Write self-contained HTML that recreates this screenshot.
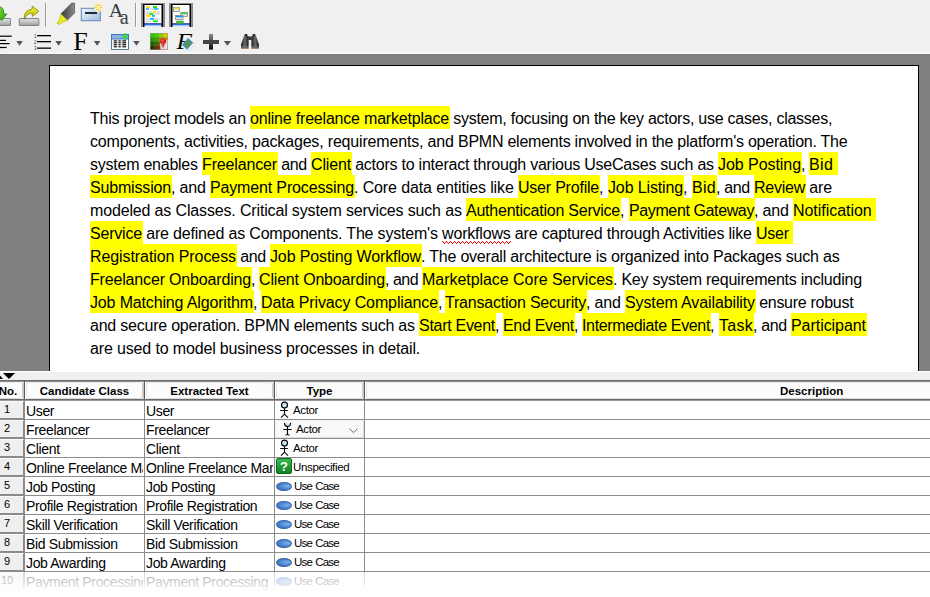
<!DOCTYPE html>
<html><head><meta charset="utf-8">
<style>
*{margin:0;padding:0;box-sizing:border-box}
html,body{width:930px;height:597px;overflow:hidden;background:#f0f0f0;font-family:"Liberation Sans",sans-serif;position:relative}
.abs{position:absolute}
#gray{position:absolute;left:0;top:54px;width:930px;height:317px;background:#808080}
#page{position:absolute;left:49px;top:65px;width:870px;height:306px;background:#fff;border:1px solid #000;border-bottom:none}
.sg{position:absolute;height:23px;line-height:25px;font-size:16px;white-space:pre;color:#000}
.sg.h{background:#ffff00}
.ln{position:absolute;left:90px;height:23px;line-height:25px;font-size:16px;white-space:pre;color:#000}
.ln b{font-weight:normal;display:inline-block;height:23px;line-height:25px;vertical-align:top;background:#ffff00}
#split{position:absolute;left:0;top:371px;width:930px;height:9px;background:#f0f0f0}
#tbl{position:absolute;left:0;top:380px;width:930px;height:217px;background:#fff}
.hl{position:absolute;background:#6e6e6e}
.hc{position:absolute;top:2px;height:17px;background:#fcfcfc;border:1px solid #e6e6e6;border-right-color:#cfcfcf;border-bottom-color:#d8d8d8;border-radius:3px;font-weight:bold;font-size:11.5px;line-height:16px;text-align:center;color:#000}
.cell{position:absolute;font-size:14px;line-height:20px;height:18px;letter-spacing:-0.35px;white-space:pre;overflow:hidden;color:#000}
.tt{position:absolute;font-size:11.5px;line-height:18px;letter-spacing:-0.35px;white-space:pre;color:#000}
.num{position:absolute;left:0;width:24px;height:19px;background:#efefef;border-top:1px solid #fcfcfc;border-bottom:2px solid #8a8a8a;border-right:1px solid #8a8a8a;font-size:11px;text-align:center;line-height:14px;padding-right:9px;color:#000}
</style></head><body>
<svg class="abs" style="left:0;top:0" width="270" height="54" viewBox="0 0 270 54">
<defs>
<linearGradient id="docb" x1="0" y1="0" x2="0" y2="1"><stop offset="0" stop-color="#0a46c0"/><stop offset="0.35" stop-color="#3a7ae0"/><stop offset="0.65" stop-color="#c8dcf8"/><stop offset="1" stop-color="#eef4fc"/></linearGradient>
<linearGradient id="tray" x1="0" y1="0" x2="0" y2="1"><stop offset="0" stop-color="#e4e4e4"/><stop offset="0.6" stop-color="#bdbdbd"/><stop offset="1" stop-color="#9a9a9a"/></linearGradient>
<linearGradient id="grn" x1="0" y1="0" x2="1" y2="1"><stop offset="0" stop-color="#7ee23a"/><stop offset="1" stop-color="#2aa010"/></linearGradient>
<linearGradient id="yel" x1="0" y1="0" x2="0" y2="1"><stop offset="0" stop-color="#f0f040"/><stop offset="1" stop-color="#b8b800"/></linearGradient>
<linearGradient id="hlb" x1="0" y1="0" x2="1" y2="0"><stop offset="0" stop-color="#3a3a3a"/><stop offset="1" stop-color="#8a8a8a"/></linearGradient>
<linearGradient id="blu" x1="0" y1="0" x2="1" y2="1"><stop offset="0" stop-color="#f2f6fc"/><stop offset="1" stop-color="#9ebce4"/></linearGradient>
<linearGradient id="plus" x1="0" y1="0" x2="0" y2="1"><stop offset="0" stop-color="#8a8a8a"/><stop offset="1" stop-color="#0a0a0a"/></linearGradient>
<linearGradient id="bino" x1="0" y1="0" x2="1" y2="0"><stop offset="0" stop-color="#1a1a1a"/><stop offset="0.5" stop-color="#6a6a6a"/><stop offset="1" stop-color="#1a1a1a"/></linearGradient>
<radialGradient id="pin" cx="0.4" cy="0.35" r="0.6"><stop offset="0" stop-color="#ff6060"/><stop offset="1" stop-color="#c00000"/></radialGradient>
</defs>
<!-- icon1: green arrow onto tray (clipped) -->
<rect x="-10" y="18.5" width="20.5" height="7" rx="0.6" fill="url(#tray)" stroke="#7c8088" stroke-width="1"/>
<path d="M-2 7 Q3 6 3.6 12 L3.6 14 L6.8 14 L1.6 20.5 L-3.6 14 L-0.5 14 Z" fill="url(#grn)" stroke="#238a0c" stroke-width="0.9"/>
<!-- icon2: yellow curved arrow onto tray -->
<rect x="19.3" y="18.5" width="19.5" height="7" rx="0.6" fill="url(#tray)" stroke="#7c8088" stroke-width="1"/>
<path d="M24.3 19.5 Q23.5 10 32 9.2 L32.3 6.2 L38.8 11.3 L32.3 16.4 L32.2 13 Q27 13 24.3 19.5 Z" fill="url(#yel)" stroke="#8c8c10" stroke-width="0.9"/>
<!-- separator -->
<rect x="45" y="3" width="1" height="24" fill="#9a9a9a"/><rect x="46" y="3" width="1" height="24" fill="#ffffff" opacity="0.8"/>
<!-- highlighter -->
<path d="M61 13.7 L71.6 3.1 L74.6 3.1 L74.6 12.9 L67.4 20.1 Z" fill="url(#hlb)" stroke="#333" stroke-width="0.5"/>
<path d="M60.9 14 L67.4 20.4 L65.4 21.2 L63.6 21.6 L59.3 24.6 L57.3 23.4 L59.6 19.4 L60.2 17.2 Z" fill="#ecec20" stroke="#a8a800" stroke-width="0.6"/>
<!-- blue rect with star -->
<rect x="81.3" y="8.3" width="19" height="12.4" fill="url(#blu)" stroke="#6688bb" stroke-width="1"/>
<rect x="85" y="12" width="12" height="2" fill="#1c2c3c"/>
<circle cx="98.4" cy="7.5" r="4.4" fill="#fdf6b0"/><g stroke="#f0a020" stroke-width="0.9"><line x1="98.4" y1="4" x2="98.4" y2="5.7"/><line x1="98.4" y1="9.3" x2="98.4" y2="11"/><line x1="94.9" y1="7.5" x2="96.6" y2="7.5"/><line x1="100.2" y1="7.5" x2="101.9" y2="7.5"/><line x1="96" y1="5.1" x2="97" y2="6.1"/><line x1="99.8" y1="8.9" x2="100.8" y2="9.9"/><line x1="100.8" y1="5.1" x2="99.8" y2="6.1"/><line x1="97" y1="8.9" x2="96" y2="9.9"/></g>
<!-- Aa -->
<text x="108.8" y="17" font-family="Liberation Serif" font-size="18" fill="#3a3e44" transform="translate(108.8 17) scale(1.12 1) translate(-108.8 -17)">A</text>
<text x="119.8" y="24" font-family="Liberation Serif" font-size="20" fill="#3a3e44">a</text>
<!-- separator -->
<rect x="135" y="3" width="1" height="24" fill="#9a9a9a"/><rect x="136" y="3" width="1" height="24" fill="#ffffff" opacity="0.8"/>
<!-- doc icon 1 -->
<rect x="141" y="3" width="24" height="24" fill="#8a8a8a"/>
<rect x="143" y="4" width="20" height="23" fill="#000"/>
<rect x="144.5" y="5" width="17" height="18.5" fill="#fff"/>
<rect x="144.5" y="23.5" width="17" height="3.5" fill="url(#docb)"/>
<g>
<rect x="146" y="6.5" width="3" height="1.5" fill="#ccc"/><rect x="147" y="6" width="3" height="2" fill="#ffe000"/><rect x="153" y="6" width="4" height="2" fill="#22dd22"/>
<rect x="146" y="8.2" width="3" height="1.6" fill="#10b0ff"/><rect x="150" y="8.5" width="4" height="1" fill="#bbb"/><rect x="154" y="8.2" width="4.5" height="1.6" fill="#10b0ff"/>
<rect x="145.5" y="11.5" width="7" height="1" fill="#bbb"/><rect x="153" y="11" width="3" height="1.8" fill="#ffe000"/><rect x="157" y="11.5" width="3" height="1" fill="#bbb"/>
<rect x="145.5" y="13.5" width="4" height="1" fill="#bbb"/><rect x="149.5" y="13" width="4" height="1.8" fill="#22dd22"/><rect x="154.5" y="13.5" width="5" height="1" fill="#bbb"/>
<rect x="146" y="15" width="5" height="1.8" fill="#ffe000"/><rect x="152" y="15" width="3" height="1.8" fill="#10b0ff"/>
<rect x="145.5" y="18.5" width="4" height="1" fill="#bbb"/><rect x="150" y="18" width="4" height="1.8" fill="#10b0ff"/><rect x="154.5" y="18.5" width="5" height="1" fill="#bbb"/>
<rect x="145.5" y="20.8" width="5" height="1" fill="#bbb"/><rect x="153" y="20.3" width="5" height="1.8" fill="#22dd22"/>
</g>
<!-- doc icon 2 -->
<rect x="169" y="3" width="24" height="24" fill="#8a8a8a"/>
<rect x="171" y="4" width="20" height="23" fill="#000"/>
<rect x="172.5" y="5" width="17" height="18.5" fill="#fff"/>
<rect x="172.5" y="23.5" width="17" height="3.5" fill="url(#docb)"/>
<rect x="173.5" y="7.3" width="6" height="4.2" fill="#e8e8e8" stroke="#777" stroke-width="0.7"/><rect x="173.9" y="7.6" width="5.2" height="1.5" fill="#ffe000"/>
<rect x="180.8" y="12.3" width="6.6" height="4" fill="#e8e8e8" stroke="#777" stroke-width="0.7"/><rect x="181.2" y="12.6" width="5.8" height="1.5" fill="#22dd22"/>
<rect x="175.6" y="15.5" width="7.4" height="4" fill="#e8e8e8" stroke="#777" stroke-width="0.7"/><rect x="176" y="15.8" width="6.6" height="1.5" fill="#1a90f0"/>
<rect x="176.5" y="21" width="6.8" height="2.5" fill="#22dd22" stroke="#777" stroke-width="0.6"/>
<!-- row2: align -->
<g fill="#000"><rect x="0" y="35.6" width="11.8" height="1.2"/><rect x="0" y="39.8" width="6" height="1.2"/><rect x="0" y="43" width="9.6" height="1.2"/><rect x="0" y="46.9" width="6.6" height="1.2"/></g>
<path d="M16.3 41 L22.8 41 L19.55 45.8 Z" fill="#555"/>
<!-- numbered list -->
<g fill="#000"><rect x="37" y="35" width="14" height="1.3"/><rect x="37" y="41" width="14" height="1.3"/><rect x="37" y="47.5" width="14" height="1.3"/></g>
<g fill="#444" font-family="Liberation Sans" font-size="4.5"><text x="34" y="37.5">1</text><text x="34" y="43.5">2</text><text x="34" y="50">3</text></g>
<path d="M55.3 41 L61.8 41 L58.55 45.8 Z" fill="#555"/>
<!-- F -->
<text x="73.3" y="50" font-family="Liberation Serif" font-size="26" fill="#000">F</text>
<path d="M93.9 41 L100.4 41 L97.15 45.8 Z" fill="#555"/>
<!-- table icon -->
<rect x="111.5" y="34.5" width="17" height="15" fill="#fff" stroke="#4f7f94" stroke-width="1"/>
<rect x="111.5" y="34.5" width="17" height="4.5" fill="#8db2e2" stroke="#3a74d0" stroke-width="1"/>
<g fill="#c0c0c0"><rect x="113.5" y="40.3" width="13" height="1.2"/><rect x="113.5" y="42.2" width="13" height="1.2"/><rect x="113.5" y="44.1" width="13" height="1.2"/><rect x="113.5" y="46.1" width="13" height="1.2"/></g>
<g fill="#1a1a1a"><rect x="113.8" y="40.3" width="3" height="1.2"/><rect x="118.6" y="40.3" width="2" height="1.2"/><rect x="122.4" y="40.3" width="3.6" height="1.2"/>
<rect x="113.8" y="42.2" width="3" height="1.2"/><rect x="118.6" y="42.2" width="2" height="1.2"/><rect x="122.4" y="42.2" width="3.6" height="1.2"/>
<rect x="113.8" y="44.1" width="3" height="1.2"/><rect x="118.6" y="44.1" width="2" height="1.2"/><rect x="122.4" y="44.1" width="3.6" height="1.2"/>
<rect x="113.8" y="46.1" width="3" height="1.2"/><rect x="118.6" y="46.1" width="2" height="1.2"/><rect x="122.4" y="46.1" width="3.6" height="1.2"/></g>
<path d="M124 33.2 h2 v2.2 h2.2 v2 h-2.2 v2.4 h-2 v-2.4 h-2.4 v-2 h2.4 Z" fill="#3ad84a"/>
<path d="M133.2 41 L139.7 41 L136.45 45.8 Z" fill="#555"/>
<!-- color grid -->
<rect x="150" y="33" width="18" height="17" fill="#999"/>
<g>
<rect x="150.5" y="33.5" width="4.2" height="4" fill="#22cc00"/><rect x="154.7" y="33.5" width="4.2" height="4" fill="#44cc00"/><rect x="158.9" y="33.5" width="4.2" height="4" fill="#88cc00"/><rect x="163.1" y="33.5" width="4.4" height="4" fill="#cccc00"/>
<rect x="150.5" y="37.5" width="4.2" height="4" fill="#229900"/><rect x="154.7" y="37.5" width="4.2" height="4" fill="#449900"/><rect x="158.9" y="37.5" width="4.2" height="4" fill="#889900"/><rect x="163.1" y="37.5" width="4.4" height="4" fill="#cc9900"/>
<rect x="150.5" y="41.5" width="4.2" height="4" fill="#116600"/><rect x="154.7" y="41.5" width="4.2" height="4" fill="#446600"/><rect x="158.9" y="41.5" width="4.2" height="4" fill="#886600"/><rect x="163.1" y="41.5" width="4.4" height="4" fill="#cc6600"/>
<rect x="150.5" y="45.5" width="4.2" height="4" fill="#223300"/><rect x="154.7" y="45.5" width="4.2" height="4" fill="#663300"/><rect x="158.9" y="45.5" width="4.2" height="4" fill="#883300"/><rect x="163.1" y="45.5" width="4.4" height="4" fill="#cc3300"/>
</g>
<path d="M160 43 L167.5 40 L167.5 49.5 L160.5 49.5 Z" fill="#e0e0e0"/>
<circle cx="163" cy="41.3" r="3" fill="url(#pin)"/>
<path d="M160.6 42.5 L165.4 42.5 L163 48.5 Z" fill="#e04040"/>
<!-- italic F with eraser -->
<text x="176.5" y="49.3" font-family="Liberation Serif" font-style="italic" font-size="24" fill="#000" transform="translate(176.5 49.3) scale(1.06 1.0) translate(-176.5 -49.3)">F</text>
<g transform="translate(187.6 43.8) rotate(-49)"><rect x="-4.3" y="-3.2" width="8.6" height="8.6" fill="#fafafa" stroke="#c8c8c8" stroke-width="0.6"/><rect x="-4.3" y="-3.2" width="8.6" height="6.4" fill="#5a9060" stroke="#3aa0f0" stroke-width="0.9"/></g>
<!-- plus -->
<rect x="209" y="34" width="4" height="15.6" fill="url(#plus)"/>
<rect x="203" y="40" width="16" height="4" fill="#444"/>
<path d="M223.9 41.1 L231 41.1 L227.45 45.7 Z" fill="#555"/>
<!-- binoculars -->
<g>
<rect x="244.5" y="34" width="3" height="2.4" rx="1" fill="#222"/><rect x="252.5" y="34" width="3" height="2.4" rx="1" fill="#222"/>
<path d="M244 36 L248.6 36 L248.6 47 L241 47 L241 44.5 Z" fill="url(#bino)"/>
<path d="M251.4 36 L256 36 L259 44.5 L259 47 L251.4 47 Z" fill="url(#bino)"/>
<rect x="248.4" y="36.5" width="3.2" height="3.5" fill="#333"/>
<rect x="241" y="46.8" width="7.6" height="0.8" fill="#ddd"/><rect x="251.4" y="46.8" width="7.6" height="0.8" fill="#ddd"/>
<rect x="241" y="47.4" width="7.6" height="1" fill="#111"/><rect x="251.4" y="47.4" width="7.6" height="1" fill="#111"/>
<rect x="241" y="48.3" width="7.6" height="0.6" fill="#c08040"/><rect x="251.4" y="48.3" width="7.6" height="0.6" fill="#c08040"/>
</g>
</svg>

<div id="gray"></div>
<div class="abs" style="left:0;top:53px;width:930px;height:1px;background:#fbfbfb"></div>
<div class="abs" style="left:0;top:54px;width:930px;height:1px;background:#777"></div>
<div id="page"></div>
<!--TEXT-->
<span class="sg" style="left:90px;top:106px;letter-spacing:-0.235px">This project models an </span>
<span class="sg h" style="left:250px;top:106px;letter-spacing:-0.199px;width:200.00px">online freelance marketplace</span>
<span class="sg" style="left:449px;top:106px;letter-spacing:-0.256px"> system, focusing on the key actors, use cases, classes,</span>
<span class="sg" style="left:90px;top:129px;letter-spacing:-0.175px">components, activities, packages, requirements, and </span>
<span class="sg" style="left:458px;top:129px;letter-spacing:-0.247px">BPMN elements involved in the platform's operation. The</span>
<span class="sg" style="left:90px;top:152px;letter-spacing:-0.241px">system enables </span>
<span class="sg h" style="left:202px;top:152px;letter-spacing:-0.148px;width:76.00px">Freelancer</span>
<span class="sg" style="left:277px;top:152px;letter-spacing:-0.319px"> and </span>
<span class="sg h" style="left:311px;top:152px;letter-spacing:-0.151px;width:41.00px">Client</span>
<span class="sg" style="left:351px;top:152px;letter-spacing:-0.240px"> actors to interact through various UseCases such as </span>
<span class="sg h" style="left:718px;top:152px;letter-spacing:-0.055px;width:84.00px">Job Posting</span>
<span class="sg" style="left:801px;top:152px;letter-spacing:-0.445px">, </span>
<span class="sg h" style="left:809px;top:152px;letter-spacing:0.355px;width:29.00px">Bid </span>
<span class="sg h" style="left:90px;top:175px;letter-spacing:-0.170px;width:82.00px">Submission</span>
<span class="sg" style="left:171px;top:175px;letter-spacing:-0.172px">, and </span>
<span class="sg h" style="left:210px;top:175px;letter-spacing:-0.152px;width:145.00px">Payment Processing</span>
<span class="sg" style="left:354px;top:175px;letter-spacing:-0.123px">. Core data entities like </span>
<span class="sg h" style="left:518px;top:175px;letter-spacing:-0.215px;width:82.00px">User Profile</span>
<span class="sg" style="left:599px;top:175px;letter-spacing:0.055px">, </span>
<span class="sg h" style="left:608px;top:175px;letter-spacing:-0.136px;width:76.00px">Job Listing</span>
<span class="sg" style="left:683px;top:175px;letter-spacing:0.055px">, </span>
<span class="sg h" style="left:692px;top:175px;letter-spacing:0.292px;width:25.00px">Bid</span>
<span class="sg" style="left:716px;top:175px;letter-spacing:-0.339px">, and </span>
<span class="sg h" style="left:754px;top:175px;letter-spacing:-0.245px;width:52.00px">Review</span>
<span class="sg" style="left:805px;top:175px;letter-spacing:-0.120px"> are</span>
<span class="sg" style="left:90px;top:198px;letter-spacing:-0.153px">modeled as Classes. Critical system services such as </span>
<span class="sg h" style="left:466px;top:198px;letter-spacing:-0.237px;width:155.00px">Authentication Service</span>
<span class="sg" style="left:620px;top:198px;letter-spacing:0.055px">, </span>
<span class="sg h" style="left:629px;top:198px;letter-spacing:-0.382px;width:126.00px">Payment Gateway</span>
<span class="sg" style="left:754px;top:198px;letter-spacing:-0.172px">, and </span>
<span class="sg h" style="left:793px;top:198px;letter-spacing:-0.046px;width:83.00px">Notification </span>
<span class="sg h" style="left:90px;top:221px;letter-spacing:-0.194px;width:53.00px">Service</span>
<span class="sg" style="left:142px;top:221px;letter-spacing:-0.189px"> are defined as Components. The system's workflows are captured through Activities like </span>
<span class="sg h" style="left:756px;top:221px;letter-spacing:-0.247px;width:37.00px">User </span>
<span class="sg h" style="left:90px;top:244px;letter-spacing:-0.081px;width:147.00px">Registration Process</span>
<span class="sg" style="left:236px;top:244px;letter-spacing:-0.319px"> and </span>
<span class="sg h" style="left:270px;top:244px;letter-spacing:-0.127px;width:152.00px">Job Posting Workflow</span>
<span class="sg" style="left:421px;top:244px;letter-spacing:-0.206px">. The overall architecture is organized into Packages such as</span>
<span class="sg h" style="left:90px;top:267px;letter-spacing:-0.169px;width:162.00px">Freelancer Onboarding</span>
<span class="sg" style="left:251px;top:267px;letter-spacing:-0.445px">, </span>
<span class="sg h" style="left:259px;top:267px;letter-spacing:-0.175px;width:127.00px">Client Onboarding</span>
<span class="sg" style="left:385px;top:267px;letter-spacing:-0.505px">, and </span>
<span class="sg h" style="left:422px;top:267px;letter-spacing:-0.043px;width:192.00px">Marketplace Core Services</span>
<span class="sg" style="left:613px;top:267px;letter-spacing:-0.234px">. Key system requirements including</span>
<span class="sg h" style="left:90px;top:290px;letter-spacing:-0.151px;width:164.00px">Job Matching Algorithm</span>
<span class="sg" style="left:253px;top:290px;letter-spacing:-0.445px">, </span>
<span class="sg h" style="left:261px;top:290px;letter-spacing:-0.114px;width:178.00px">Data Privacy Compliance</span>
<span class="sg" style="left:438px;top:290px;letter-spacing:-0.945px">, </span>
<span class="sg h" style="left:445px;top:290px;letter-spacing:-0.212px;width:142.00px">Transaction Security</span>
<span class="sg" style="left:586px;top:290px;letter-spacing:-0.172px">, and </span>
<span class="sg h" style="left:625px;top:290px;letter-spacing:-0.116px;width:131.00px">System Availability</span>
<span class="sg" style="left:755px;top:290px;letter-spacing:-0.284px"> ensure robust</span>
<span class="sg" style="left:90px;top:313px;letter-spacing:-0.224px">and secure operation. BPMN elements such as </span>
<span class="sg h" style="left:419px;top:313px;letter-spacing:-0.287px;width:77.00px">Start Event</span>
<span class="sg" style="left:495px;top:313px;letter-spacing:-0.445px">, </span>
<span class="sg h" style="left:503px;top:313px;letter-spacing:-0.314px;width:72.00px">End Event</span>
<span class="sg" style="left:574px;top:313px;letter-spacing:-0.445px">, </span>
<span class="sg h" style="left:582px;top:313px;letter-spacing:-0.350px;width:129.00px">Intermediate Event</span>
<span class="sg" style="left:710px;top:313px;letter-spacing:0.055px">, </span>
<span class="sg h" style="left:719px;top:313px;letter-spacing:0.273px;width:35.00px">Task</span>
<span class="sg" style="left:753px;top:313px;letter-spacing:-0.339px">, and </span>
<span class="sg h" style="left:791px;top:313px;letter-spacing:-0.054px;width:76.00px">Participant</span>
<span class="sg" style="left:90px;top:336px;letter-spacing:-0.148px">are used to model business processes in detail.</span>
<!--/TEXT-->
<svg class="abs" style="left:440px;top:239px" width="72" height="6" shape-rendering="crispEdges"><path d="M2 2h1v1h-1zM3 3h1v1h-1zM4 4h1v1h-1zM5 3h1v1h-1zM6 2h1v1h-1zM7 3h1v1h-1zM8 4h1v1h-1zM9 3h1v1h-1zM10 2h1v1h-1zM11 3h1v1h-1zM12 4h1v1h-1zM13 3h1v1h-1zM14 2h1v1h-1zM15 3h1v1h-1zM16 4h1v1h-1zM17 3h1v1h-1zM18 2h1v1h-1zM19 3h1v1h-1zM20 4h1v1h-1zM21 3h1v1h-1zM22 2h1v1h-1zM23 3h1v1h-1zM24 4h1v1h-1zM25 3h1v1h-1zM26 2h1v1h-1zM27 3h1v1h-1zM28 4h1v1h-1zM29 3h1v1h-1zM30 2h1v1h-1zM31 3h1v1h-1zM32 4h1v1h-1zM33 3h1v1h-1zM34 2h1v1h-1zM35 3h1v1h-1zM36 4h1v1h-1zM37 3h1v1h-1zM38 2h1v1h-1zM39 3h1v1h-1zM40 4h1v1h-1zM41 3h1v1h-1zM42 2h1v1h-1zM43 3h1v1h-1zM44 4h1v1h-1zM45 3h1v1h-1zM46 2h1v1h-1zM47 3h1v1h-1zM48 4h1v1h-1zM49 3h1v1h-1zM50 2h1v1h-1zM51 3h1v1h-1zM52 4h1v1h-1zM53 3h1v1h-1zM54 2h1v1h-1zM55 3h1v1h-1zM56 4h1v1h-1zM57 3h1v1h-1zM58 2h1v1h-1zM59 3h1v1h-1zM60 4h1v1h-1zM61 3h1v1h-1zM62 2h1v1h-1zM63 3h1v1h-1zM64 4h1v1h-1zM65 3h1v1h-1zM66 2h1v1h-1zM67 3h1v1h-1zM68 4h1v1h-1zM69 3h1v1h-1zM70 2h1v1h-1z" fill="#ff0000"/></svg>
<div id="split"></div>
<div class="abs" style="left:0;top:371px;width:930px;height:1px;background:#fff"></div>
<svg class="abs" style="left:0;top:372px" width="20" height="8"><path d="M3 1 L15 1 L9 7 Z" fill="#000"/><path d="M-3 7 L3 7 L0 3.5 Z" fill="#000"/></svg>
<div id="tbl">
<div class="hl" style="left:0;top:0;width:930px;height:1px;background:#6a6a6a"></div>
<div class="hl" style="left:0;top:1px;width:930px;height:1px;background:#8e949a"></div><div class="hl" style="left:0;top:2px;width:930px;height:1px;background:#fff"></div>
<div class="hc" style="left:-7px;width:30px">No.</div>
<div class="hc" style="left:26px;width:117px">Candidate Class</div>
<div class="hc" style="left:146px;width:127px">Extracted Text</div>
<div class="hc" style="left:276px;width:87px">Type</div>
<div class="hc" style="left:366px;width:564px;border-right:none;border-radius:3px 0 0 3px;text-indent:0"><span style="position:absolute;left:413px;top:0">Description</span></div>
<div class="hl" style="left:23px;top:2px;width:1px;height:17px;background:#c4c4c4"></div><div class="hl" style="left:24px;top:1px;width:1px;height:19px;background:#5a5a5a"></div>
<div class="hl" style="left:143px;top:2px;width:1px;height:17px;background:#c4c4c4"></div><div class="hl" style="left:144px;top:1px;width:1px;height:19px;background:#5a5a5a"></div>
<div class="hl" style="left:273px;top:2px;width:1px;height:17px;background:#c4c4c4"></div><div class="hl" style="left:274px;top:1px;width:1px;height:19px;background:#5a5a5a"></div>
<div class="hl" style="left:363px;top:2px;width:1px;height:17px;background:#c4c4c4"></div><div class="hl" style="left:364px;top:1px;width:1px;height:19px;background:#5a5a5a"></div>
<div class="hl" style="left:0;top:19px;width:930px;height:1px;background:#6a6a6a"></div>
<div class="hl" style="left:0;top:20px;width:930px;height:1px;background:#9a9a9a"></div>
</div>
<div id="rows" class="abs" style="left:0;top:400px;width:930px;height:197px">
<div class="num" style="top:1px">1</div>
<div class="cell" style="left:26px;top:1px;width:117px">User</div>
<div class="cell" style="left:146px;top:1px;width:127px">User</div>
<svg class="abs" style="left:274px;top:0px" width="20" height="19"><circle cx="10.5" cy="5.1" r="3" fill="#c4e4fa" stroke="#000" stroke-width="1.1"/><path d="M10.5 8.2 V14.3 M6.2 10.5 H13.8 M7 17.6 L10.5 14.2 L14 17.6" stroke="#000" stroke-width="1.1" fill="none"/></svg>
<div class="tt" style="left:293px;top:1px">Actor</div>
<div class="hl" style="left:0;top:19px;width:930px;height:1px;background:#8c8c8c"></div>
<div class="num" style="top:20px">2</div>
<div class="cell" style="left:26px;top:20px;width:117px">Freelancer</div>
<div class="cell" style="left:146px;top:20px;width:127px">Freelancer</div>
<div class="abs" style="left:275px;top:20px;width:89px;height:18px;background:#f9f9f9;border:1px solid #dedede;border-left-color:#f4f4f4;border-top-color:#f4f4f4"></div>
<svg class="abs" style="left:274px;top:20px" width="20" height="18"><path d="M10.6 3.6 A3 3 0 0 0 16.6 3.6 Z" fill="#c4e4fa"/><path d="M10.6 2.8 V3.6 A3 3 0 0 0 16.6 3.6 V2.8" fill="none" stroke="#000" stroke-width="1.1"/><path d="M13.5 7 V14.6 M9.3 9.5 H17.6 M11.6 15.3 Q13.5 13.6 15.4 15.3" stroke="#000" stroke-width="1.1" fill="none"/></svg>
<div class="tt" style="left:296px;top:20px">Actor</div>
<svg class="abs" style="left:348px;top:28px" width="11" height="6"><path d="M1.5 0.8 L5.5 4.6 L9.5 0.8" stroke="#666" stroke-width="1" fill="none"/></svg>
<div class="hl" style="left:0;top:38px;width:930px;height:1px;background:#8c8c8c"></div>
<div class="num" style="top:39px">3</div>
<div class="cell" style="left:26px;top:39px;width:117px">Client</div>
<div class="cell" style="left:146px;top:39px;width:127px">Client</div>
<svg class="abs" style="left:274px;top:38px" width="20" height="19"><circle cx="10.5" cy="5.1" r="3" fill="#c4e4fa" stroke="#000" stroke-width="1.1"/><path d="M10.5 8.2 V14.3 M6.2 10.5 H13.8 M7 17.6 L10.5 14.2 L14 17.6" stroke="#000" stroke-width="1.1" fill="none"/></svg>
<div class="tt" style="left:293px;top:39px">Actor</div>
<div class="hl" style="left:0;top:57px;width:930px;height:1px;background:#8c8c8c"></div>
<div class="num" style="top:58px">4</div>
<div class="cell" style="left:26px;top:58px;width:117px">Online Freelance Marketplace</div>
<div class="cell" style="left:146px;top:58px;width:127px">Online Freelance Marketplace</div>
<div class="abs" style="left:276px;top:58px;width:16px;height:16px;border-radius:2px;background:linear-gradient(#3fb84e,#0e8424);border:1px solid #0a6a1a;color:#fff;font-weight:bold;font-size:13px;line-height:15px;text-align:center">?</div>
<div class="tt" style="left:293px;top:58px">Unspecified</div>
<div class="hl" style="left:0;top:76px;width:930px;height:1px;background:#8c8c8c"></div>
<div class="num" style="top:77px">5</div>
<div class="cell" style="left:26px;top:77px;width:117px">Job Posting</div>
<div class="cell" style="left:146px;top:77px;width:127px">Job Posting</div>
<div class="abs" style="left:276px;top:82px;width:16px;height:9px;border-radius:50%;background:radial-gradient(ellipse at 75% 45%,#7ab0ea,#3a72c0 75%);border:1px solid #3466a8"></div>
<div class="tt" style="left:294px;top:77px;word-spacing:0.5px;letter-spacing:-0.75px">Use Case</div>
<div class="hl" style="left:0;top:95px;width:930px;height:1px;background:#8c8c8c"></div>
<div class="num" style="top:96px">6</div>
<div class="cell" style="left:26px;top:96px;width:117px">Profile Registration</div>
<div class="cell" style="left:146px;top:96px;width:127px">Profile Registration</div>
<div class="abs" style="left:276px;top:101px;width:16px;height:9px;border-radius:50%;background:radial-gradient(ellipse at 75% 45%,#7ab0ea,#3a72c0 75%);border:1px solid #3466a8"></div>
<div class="tt" style="left:294px;top:96px;word-spacing:0.5px;letter-spacing:-0.75px">Use Case</div>
<div class="hl" style="left:0;top:114px;width:930px;height:1px;background:#8c8c8c"></div>
<div class="num" style="top:115px">7</div>
<div class="cell" style="left:26px;top:115px;width:117px">Skill Verification</div>
<div class="cell" style="left:146px;top:115px;width:127px">Skill Verification</div>
<div class="abs" style="left:276px;top:120px;width:16px;height:9px;border-radius:50%;background:radial-gradient(ellipse at 75% 45%,#7ab0ea,#3a72c0 75%);border:1px solid #3466a8"></div>
<div class="tt" style="left:294px;top:115px;word-spacing:0.5px;letter-spacing:-0.75px">Use Case</div>
<div class="hl" style="left:0;top:133px;width:930px;height:1px;background:#8c8c8c"></div>
<div class="num" style="top:134px">8</div>
<div class="cell" style="left:26px;top:134px;width:117px">Bid Submission</div>
<div class="cell" style="left:146px;top:134px;width:127px">Bid Submission</div>
<div class="abs" style="left:276px;top:139px;width:16px;height:9px;border-radius:50%;background:radial-gradient(ellipse at 75% 45%,#7ab0ea,#3a72c0 75%);border:1px solid #3466a8"></div>
<div class="tt" style="left:294px;top:134px;word-spacing:0.5px;letter-spacing:-0.75px">Use Case</div>
<div class="hl" style="left:0;top:152px;width:930px;height:1px;background:#8c8c8c"></div>
<div class="num" style="top:153px">9</div>
<div class="cell" style="left:26px;top:153px;width:117px">Job Awarding</div>
<div class="cell" style="left:146px;top:153px;width:127px">Job Awarding</div>
<div class="abs" style="left:276px;top:158px;width:16px;height:9px;border-radius:50%;background:radial-gradient(ellipse at 75% 45%,#7ab0ea,#3a72c0 75%);border:1px solid #3466a8"></div>
<div class="tt" style="left:294px;top:153px;word-spacing:0.5px;letter-spacing:-0.75px">Use Case</div>
<div class="hl" style="left:0;top:171px;width:930px;height:1px;background:#8c8c8c"></div>
<div class="num" style="top:172px">10</div>
<div class="cell" style="left:26px;top:172px;width:117px">Payment Processing</div>
<div class="cell" style="left:146px;top:172px;width:127px">Payment Processing</div>
<div class="abs" style="left:276px;top:177px;width:16px;height:9px;border-radius:50%;background:radial-gradient(ellipse at 75% 45%,#7ab0ea,#3a72c0 75%);border:1px solid #3466a8"></div>
<div class="tt" style="left:294px;top:172px;word-spacing:0.5px;letter-spacing:-0.75px">Use Case</div>
<div class="hl" style="left:0;top:190px;width:930px;height:1px;background:#8c8c8c"></div>
<div class="hl" style="left:24px;top:0;width:1px;height:197px;background:#8c8c8c"></div>
<div class="hl" style="left:144px;top:0;width:1px;height:197px;background:#8c8c8c"></div>
<div class="hl" style="left:274px;top:0;width:1px;height:197px;background:#8c8c8c"></div>
<div class="hl" style="left:364px;top:0;width:1px;height:197px;background:#8c8c8c"></div>
<div class="abs" style="left:0;top:172px;width:930px;height:25px;background:linear-gradient(rgba(255,255,255,0.62),rgba(255,255,255,0.85) 55%,#fff 76%)"></div>
</div>
</body></html>
